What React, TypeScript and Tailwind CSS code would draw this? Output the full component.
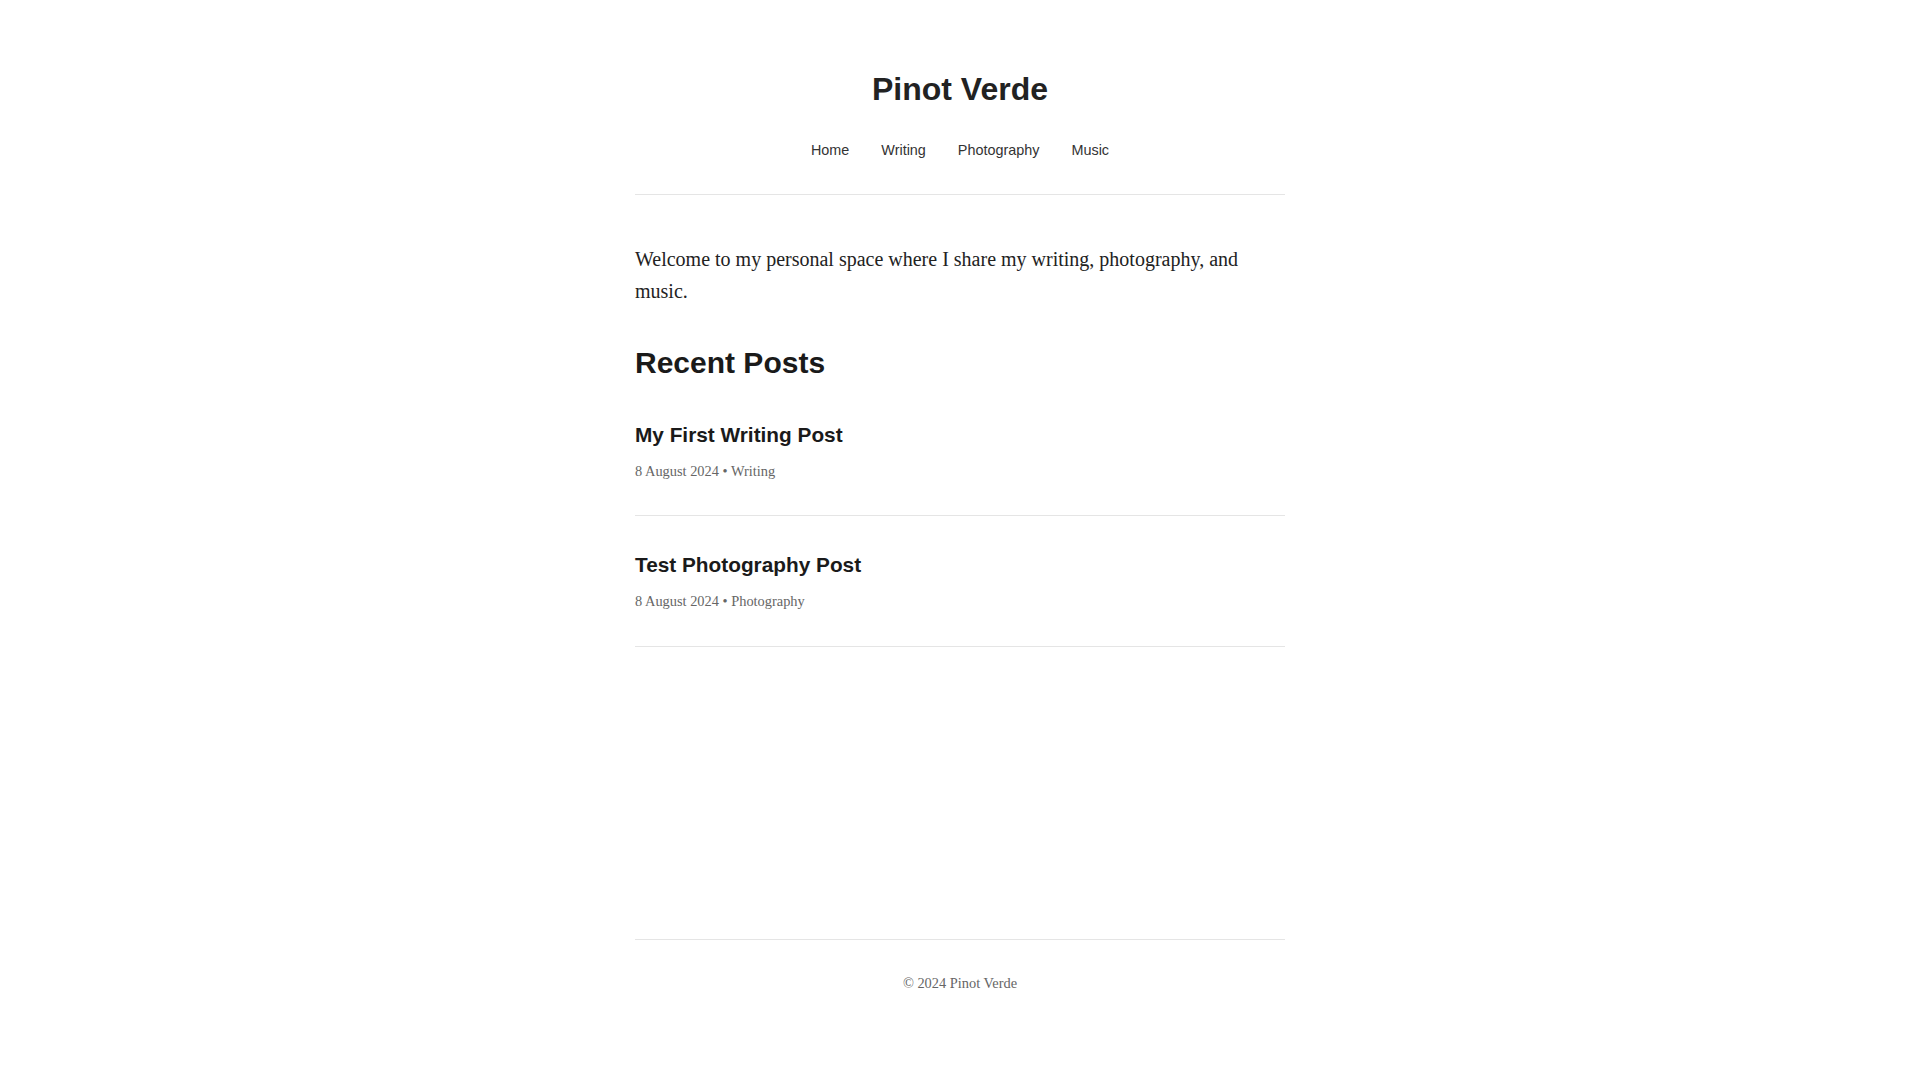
import React from 'react';

const navItems = ['Home', 'Writing', 'Photography', 'Music'];

const posts = [
  { title: 'My First Writing Post', date: '8 August 2024', category: 'Writing' },
  { title: 'Test Photography Post', date: '8 August 2024', category: 'Photography' },
];

const sans = "font-['Liberation_Sans',Arial,sans-serif]";

const App: React.FC = () => {
  return (
    <div className="min-h-screen bg-white flex flex-col items-center font-['Liberation_Serif','Times_New_Roman',serif] text-[#222]">
      <div className="w-[650px] flex flex-col flex-1">
        {/* Header */}
        <header className="pt-[70px] pb-[33px] border-b border-[#e5e5e5] text-center">
          <h1 className={`${sans} text-[32px] leading-[38px] font-bold text-[#222]`}>Pinot Verde</h1>
          <nav className={`${sans} mt-[31px] flex justify-center gap-8 text-[14.4px] leading-[22px] text-[#333]`}>
            {navItems.map((item) => (
              <a key={item} href="#" className="hover:underline">
                {item}
              </a>
            ))}
          </nav>
        </header>

        {/* Main */}
        <main className="flex-1">
          <p className="mt-[48px] text-[20px] leading-[32px] text-[#222]">
            Welcome to my personal space where I share my writing, photography, and music.
          </p>

          <h2 className={`${sans} mt-[38px] text-[30px] leading-[36px] font-bold text-[#1a1a1a]`}>Recent Posts</h2>

          <div className="mt-[41px]">
            {posts.map((post, index) => (
              <article
                key={post.title}
                className={`border-b border-[#e5e5e5] ${index > 0 ? 'pt-[36px] pb-[34px]' : 'pb-[33px]'}`}
              >
                <h3 className={`${sans} text-[20.8px] leading-[25px] font-bold text-[#1a1a1a]`}>{post.title}</h3>
                <p className="mt-[13px] text-[14.4px] leading-[22px] text-[#666]">
                  {post.date} • {post.category}
                </p>
              </article>
            ))}
          </div>
        </main>

        {/* Footer */}
        <footer className="border-t border-[#e5e5e5] pt-[32px] pb-[86px] text-center">
          <p className="text-[14.4px] leading-[22px] text-[#666]">© 2024 Pinot Verde</p>
        </footer>
      </div>
    </div>
  );
};

export default App;
